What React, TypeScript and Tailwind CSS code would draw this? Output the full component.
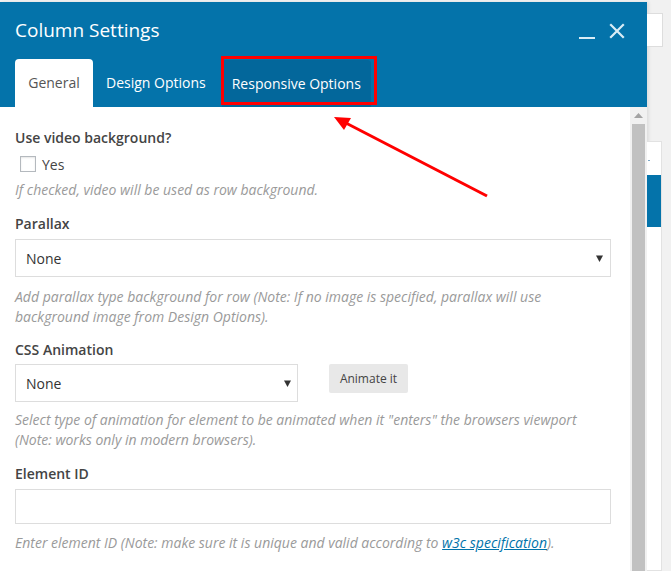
import React from 'react';

const font = { fontFamily: '"Open Sans", "Liberation Sans", sans-serif' };

const Caret = () => (
  <svg width="7" height="7" viewBox="0 0 7 7" className="shrink-0">
    <path d="M0 0.5 H7 L3.5 7 Z" fill="#333" />
  </svg>
);

const Help: React.FC<{ className?: string; children: React.ReactNode }> = ({ className = '', children }) => (
  <p className={`text-[14px] italic leading-[20px] text-[#9a9a9a] ${className}`}>{children}</p>
);

const Label: React.FC<{ className?: string; children: React.ReactNode }> = ({ className = '', children }) => (
  <div className={`text-[14px] font-semibold leading-[20px] text-[#444] ${className}`}>{children}</div>
);

const App: React.FC = () => {
  return (
    <div className="relative w-[671px] h-[571px] overflow-hidden bg-[#f1f1f1] flex" style={font}>
      {/* modal */}
      <div className="w-[647px] mt-[2px] flex flex-col bg-white shadow-[2px_0_3px_rgba(0,0,0,0.08)] shrink-0">
        <header className="h-[105px] bg-[#0473aa] flex flex-col shrink-0">
          <div className="flex items-center justify-between pl-[15px] pr-[22px] pt-[14px]">
            <h1 className="text-[19px] leading-[28px] text-white font-normal">Column Settings</h1>
            <div className="flex items-center gap-[14px] pt-[2px]">
              <span className="block w-[16px] h-[2px] bg-[#d9ecf6] mt-[14px]"></span>
              <svg width="16" height="16" viewBox="0 0 16 16">
                <path d="M2 2 L14 14 M14 2 L2 14" stroke="#d9ecf6" strokeWidth="2.2" strokeLinecap="square" />
              </svg>
            </div>
          </div>
          <nav className="flex items-end mt-auto pl-[15px] h-[48px] text-[14px]">
            <div className="h-[48px] w-[78px] bg-white rounded-t-[4px] flex items-center justify-center text-[#555] pb-[1px]">
              General
            </div>
            <div className="h-[48px] px-[13px] flex items-center text-white pb-[1px]">Design Options</div>
            <div className="h-[47px] px-[10px] ml-[3px] flex items-center text-white bg-[#03679b] rounded-t-[4px]">
              Responsive Options
            </div>
          </nav>
        </header>

        <div className="flex flex-1 min-h-0">
          <div className="w-[630px] pl-[15px] pr-[19px] pt-[21px]">
            <Label>Use video background?</Label>
            <label className="flex items-center mt-[6px] h-[20px] pl-[5px] text-[14px] text-[#444]">
              <span className="w-[16px] h-[16px] border border-[#b4b9be] bg-white shadow-[inset_0_1px_2px_rgba(0,0,0,0.1)]"></span>
              <span className="ml-[6px]">Yes</span>
            </label>
            <Help className="mt-[6px]">If checked, video will be used as row background.</Help>

            <Label className="mt-[14px]">Parallax</Label>
            <div className="mt-[5px] h-[38px] border border-[#dddddd] flex items-center justify-between pl-[10px] pr-[7px] text-[14px] text-[#333]">
              <span>None</span>
              <Caret />
            </div>
            <Help className="mt-[10px]">
              Add parallax type background for row (Note: If no image is specified, parallax will use
              <br />
              background image from Design Options).
            </Help>

            <Label className="mt-[13px]">CSS Animation</Label>
            <div className="flex items-start mt-[4px]">
              <div className="w-[283px] h-[38px] border border-[#dddddd] flex items-center justify-between pl-[10px] pr-[6px] text-[14px] text-[#333]">
                <span>None</span>
                <Caret />
              </div>
              <button className="ml-[31px] h-[29px] w-[79px] bg-[#e8e8e8] rounded-[2px] text-[12px] text-[#444]">
                Animate it
              </button>
            </div>
            <Help className="mt-[8px]">
              Select type of animation for element to be animated when it "enters" the browsers viewport
              <br />
              (Note: works only in modern browsers).
            </Help>

            <Label className="mt-[14px]">Element ID</Label>
            <div className="mt-[5px] h-[35px] border border-[#dddddd]"></div>
            <Help className="mt-[9px]">
              Enter element ID (Note: make sure it is unique and valid according to{' '}
              <a className="text-[#0073aa] underline">w3c specification</a>).
            </Help>
          </div>

          {/* scrollbar */}
          <div className="w-[17px] bg-[#f1f1f1] flex flex-col items-center">
            <svg width="9" height="5" viewBox="0 0 9 5" className="mt-[6px]">
              <path d="M0 5 L4.5 0 L9 5 Z" fill="#a3a3a3" />
            </svg>
            <div className="mt-[6px] w-[13px] flex-1 bg-[#c1c1c1]"></div>
          </div>
        </div>
      </div>

      {/* page behind the modal */}
      <div className="flex-1 flex flex-col">
        <div className="mt-[13px] h-[34px] w-[16px] bg-white border border-l-0 border-[#dddddd]"></div>
        <div className="mt-[94px] flex-1 w-[15px] bg-white border border-l-0 border-[#e2e2e2] flex flex-col">
          <div className="h-[18px]"></div>
          <div className="h-[1px] w-[2px] bg-[#7aa7c7] ml-[1px]"></div>
          <div className="mt-[14px] h-[52px] bg-[#0473aa]"></div>
        </div>
      </div>

      {/* annotation */}
      <div className="absolute left-[221px] top-[56px] w-[156px] h-[49px] border-[3px] border-[#ff0000] pointer-events-none"></div>
      <svg className="absolute left-0 top-0 pointer-events-none" width="671" height="571">
        <line x1="487" y1="196" x2="344" y2="122" stroke="#ff0000" strokeWidth="3" />
        <path d="M334 117 L351 118 L344 130 Z" fill="#ff0000" />
      </svg>
    </div>
  );
};

export default App;
